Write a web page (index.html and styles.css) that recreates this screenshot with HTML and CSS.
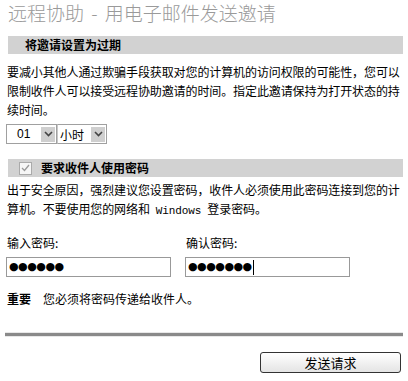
FILE: index.html
```html
<!DOCTYPE html>
<html lang="zh-CN">
<head>
<meta charset="utf-8">
<link rel="stylesheet" href="styles.css">
</head>
<body>
<div class="page">
  <h1 class="title">远程协助 - 用电子邮件发送邀请</h1>
  <div class="bar"><span class="bar-text">将邀请设置为过期</span></div>
  <p class="para para-first">要减小其他人通过欺骗手段获取对您的计算机的访问权限的可能性，您可以限制收件人可以接受远程协助邀请的时间。指定此邀请保持为打开状态的持续时间。</p>
  <div class="selects">
    <div class="sel sel-num"><span class="sel-val">01</span><span class="arrow"><svg width="9" height="6" viewBox="0 0 9 6"><path d="M1 1 L4.5 4.5 L8 1" fill="none" stroke="#444" stroke-width="1.6"/></svg></span></div>
    <div class="sel sel-unit"><span class="sel-val">小时</span><span class="arrow"><svg width="9" height="6" viewBox="0 0 9 6"><path d="M1 1 L4.5 4.5 L8 1" fill="none" stroke="#444" stroke-width="1.6"/></svg></span></div>
  </div>
  <div class="bar bar-check">
    <span class="check"><svg width="9" height="8" viewBox="0 0 9 8"><path d="M1 4 L3.5 6.5 L8 1" fill="none" stroke="#999" stroke-width="1.3"/></svg></span>
    <span class="bar-text">要求收件人使用密码</span>
  </div>
  <p class="para para-second">出于安全原因，强烈建议您设置密码，收件人必须使用此密码连接到您的计<br>算机。不要使用您的网络和<span class="mono">Windows</span>登录密码。</p>
  <div class="pw-row">
    <div class="pw-col">
      <div class="label">输入密码:</div>
      <div class="input"><span class="dots">●●●●●●</span></div>
    </div>
    <div class="pw-col">
      <div class="label">确认密码:</div>
      <div class="input"><span class="dots">●●●●●●●</span><span class="caret"></span></div>
    </div>
  </div>
  <p class="important"><b>重要</b><span class="imp-text">您必须将密码传递给收件人。</span></p>
  <div class="rule"></div>
  <div class="actions"><button class="btn">发送请求</button></div>
</div>
</body>
</html>
```
FILE: styles.css
```css
html, body {
  margin: 0;
  padding: 0;
  background: #fff;
}
body {
  font-family: "Noto Sans CJK SC", "Noto Sans", sans-serif;
  font-size: 12px;
  color: #000;
}
.page {
  width: 408px;
  height: 381px;
  overflow: hidden;
  padding: 0 5px;
  box-sizing: border-box;
}
.title {
  margin: 0;
  padding: 2px 0 0 3px;
  height: 36px;
  box-sizing: border-box;
  font-size: 19px;
  font-weight: 300;
  line-height: 22px;
  color: #9a9a9a;
  white-space: nowrap;
  word-spacing: 3px;
}
.bar {
  height: 18px;
  background: #d2d2d2;
  border-left: 3px solid #fff;
  display: flex;
  align-items: center;
}
.bar-text {
  font-weight: bold;
  font-size: 12px;
  line-height: 18px;
  padding-left: 17px;
}
.para {
  margin: 0;
  padding-left: 2px;
  line-height: 19px;
  letter-spacing: -0.1px;
}
.para-first { margin-top: 8px; }
.para-second { margin-top: 3px; }
.selects {
  display: flex;
  margin-top: 5px;
  padding-left: 1px;
}
.sel {
  height: 20px;
  border: 1px solid #a0a0a0;
  box-sizing: border-box;
  display: flex;
  align-items: center;
  justify-content: space-between;
  background: #fff;
}
.sel-num { width: 51px; }
.sel-unit { width: 50px; border-left: 1px solid #c8c8c8; }
.sel-num .sel-val { padding-left: 10px; font-family: "Liberation Sans", sans-serif; }
.sel-unit .sel-val { padding-left: 2px; }
.arrow {
  width: 14px;
  height: 15px;
  margin-right: 1px;
  background: #cfcfcf;
  display: flex;
  align-items: center;
  justify-content: center;
}
.bar-check {
  margin-top: 15px;
}
.check {
  margin-left: 11px;
  width: 11px;
  height: 11px;
  border: 1px solid #aaa;
  background: #f6f6f6;
  display: flex;
  align-items: center;
  justify-content: center;
}
.bar-check .bar-text {
  padding-left: 9px;
}
.mono {
  font-family: "Liberation Mono", monospace;
  font-size: 11px;
  margin: 0 6px;
}
.pw-row {
  display: flex;
  margin-top: 13px;
  padding-left: 1px;
}
.pw-col {
  width: 179px;
}
.label {
  padding-left: 1px;
  line-height: 18px;
}
.input {
  margin-top: 5px;
  width: 165px;
  height: 20px;
  border: 1px solid #999;
  box-sizing: border-box;
  display: flex;
  align-items: center;
  padding-left: 2px;
}
.dots {
  font-family: "DejaVu Sans", sans-serif;
  font-size: 11px;
  letter-spacing: -0.5px;
  line-height: 14px;
}
.caret {
  width: 1px;
  height: 15px;
  background: #000;
  margin-left: 1px;
}
.important {
  margin: 13px 0 0;
  padding-left: 2px;
  line-height: 18px;
}
.imp-text {
  margin-left: 12px;
}
.rule {
  margin-top: 24px;
  height: 3px;
  background: #8a8a8a;
  border-top: 1px solid #e8e8e8;
  border-bottom: 1px solid #e8e8e8;
}
.actions {
  display: flex;
  justify-content: flex-end;
  margin-top: 15px;
  padding-right: 2px;
}
.btn {
  width: 141px;
  height: 21px;
  padding: 0;
  border: 1px solid #333;
  border-radius: 3px;
  background: linear-gradient(#ffffff, #e4e4e4);
  font-family: "Noto Sans CJK SC", sans-serif;
  font-size: 13px;
  line-height: 19px;
  color: #000;
}
```
